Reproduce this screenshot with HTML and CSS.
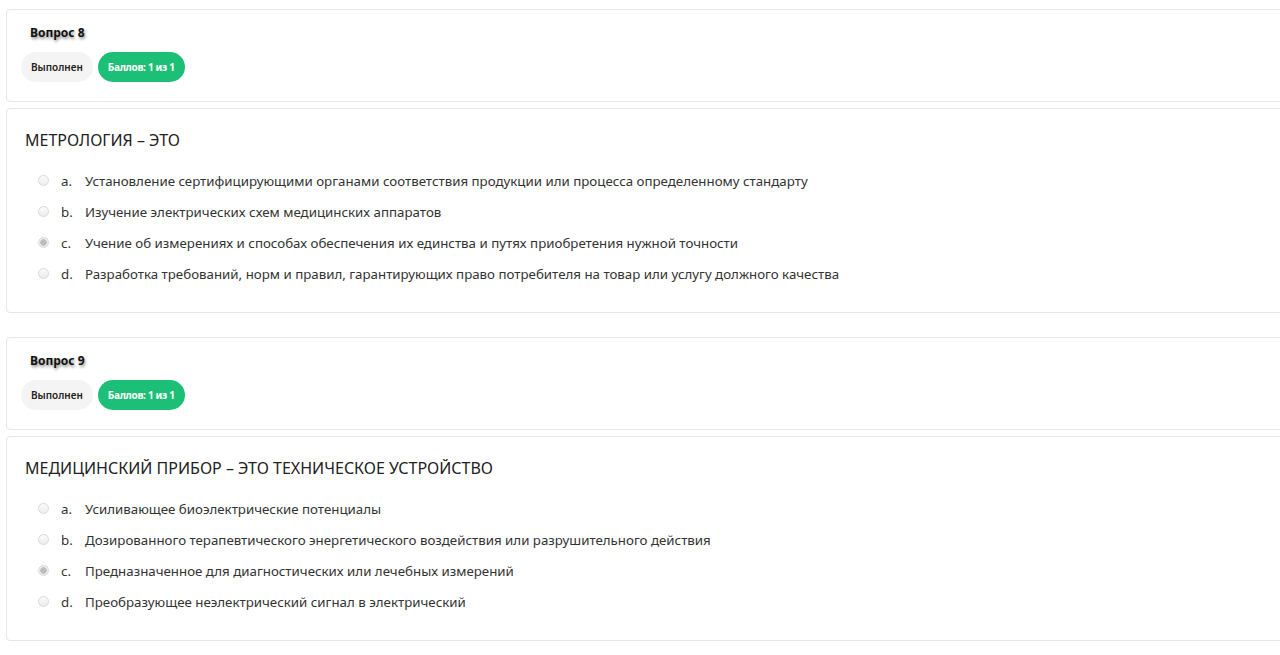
FILE: index.html
```html
<!DOCTYPE html>
<html lang="ru">
<head>
  <meta charset="UTF-8" />
  <title>Тест</title>
  <link rel="stylesheet" href="styles.css">
</head>
<body>

<div class="page">
  <div class="info">
    <div class="info-title">Вопрос 8</div>
    <div class="badges">
      <span class="badge">Выполнен</span>
      <span class="badge badge-green">Баллов: 1 из 1</span>
    </div>
  </div>
  <div class="question">
    <div class="q-text">МЕТРОЛОГИЯ – ЭТО</div>
    <div class="answers">
      <label class="answer"><span class="radio"></span><span class="letter">a.</span>Установление сертифицирующими органами соответствия продукции или процесса определенному стандарту</label>
      <label class="answer"><span class="radio"></span><span class="letter">b.</span>Изучение электрических схем медицинских аппаратов</label>
      <label class="answer"><span class="radio checked"></span><span class="letter">c.</span>Учение об измерениях и способах обеспечения их единства и путях приобретения нужной точности</label>
      <label class="answer"><span class="radio"></span><span class="letter">d.</span>Разработка требований, норм и правил, гарантирующих право потребителя на товар или услугу должного качества</label>
    </div>
  </div>

  <div class="info">
    <div class="info-title">Вопрос 9</div>
    <div class="badges">
      <span class="badge">Выполнен</span>
      <span class="badge badge-green">Баллов: 1 из 1</span>
    </div>
  </div>
  <div class="question">
    <div class="q-text">МЕДИЦИНСКИЙ ПРИБОР – ЭТО ТЕХНИЧЕСКОЕ УСТРОЙСТВО</div>
    <div class="answers">
      <label class="answer"><span class="radio"></span><span class="letter">a.</span>Усиливающее биоэлектрические потенциалы</label>
      <label class="answer"><span class="radio"></span><span class="letter">b.</span>Дозированного терапевтического энергетического воздействия или разрушительного действия</label>
      <label class="answer"><span class="radio checked"></span><span class="letter">c.</span>Предназначенное для диагностических или лечебных измерений</label>
      <label class="answer"><span class="radio"></span><span class="letter">d.</span>Преобразующее неэлектрический сигнал в электрический</label>
    </div>
  </div>
</div>

</body>
</html>
```

FILE: styles.css
```css
body {
  margin: 0;
  padding: 0;
  background-color: #fff;
  font-family: 'Noto Sans', sans-serif;
  color: #333;
  overflow: hidden;
}

.page {
  width: 1300px;
  padding: 9px 0 0 6px;
}

.info, .question {
  border: 1px solid #e6e6e6;
  border-radius: 4px;
  background-color: #fff;
}

.info {
  padding: 15px 15px 18px 14px;
  margin-bottom: 6px;
}

.info-title {
  font-size: 12px;
  font-weight: 700;
  color: #111;
  line-height: 16px;
  margin-left: 9px;
  text-shadow: 1px 2px 3px rgba(0, 0, 0, 0.45);
}

.badges {
  display: flex;
  gap: 5px;
  margin-top: 11px;
  margin-bottom: 1px;
}

.badge {
  display: inline-flex;
  align-items: center;
  height: 30px;
  padding: 0 10px;
  border-radius: 15px;
  background-color: #f4f4f4;
  font-size: 10px;
  font-weight: 600;
  color: #222;
}

.badge-green {
  background-color: #1bbf75;
  color: #fff;
  font-weight: 700;
  letter-spacing: -0.3px;
}

.question {
  padding: 19px 18px 23px 18px;
  margin-bottom: 24px;
}

.q-text {
  font-size: 16px;
  line-height: 24px;
  color: #222;
  margin-bottom: 13px;
}

.answer {
  display: flex;
  align-items: center;
  height: 31px;
  font-size: 13.3px;
  color: #333;
  padding-left: 13px;
}

.letter {
  width: 24px;
}

.radio {
  width: 9px;
  height: 9px;
  border: 1px solid #dadada;
  border-radius: 50%;
  background: linear-gradient(#fbfbfb, #ececec);
  margin-right: 12px;
}

.radio.checked {
  background: radial-gradient(circle, #bdbdbd 0 3px, #ededed 3.5px);
}
```
